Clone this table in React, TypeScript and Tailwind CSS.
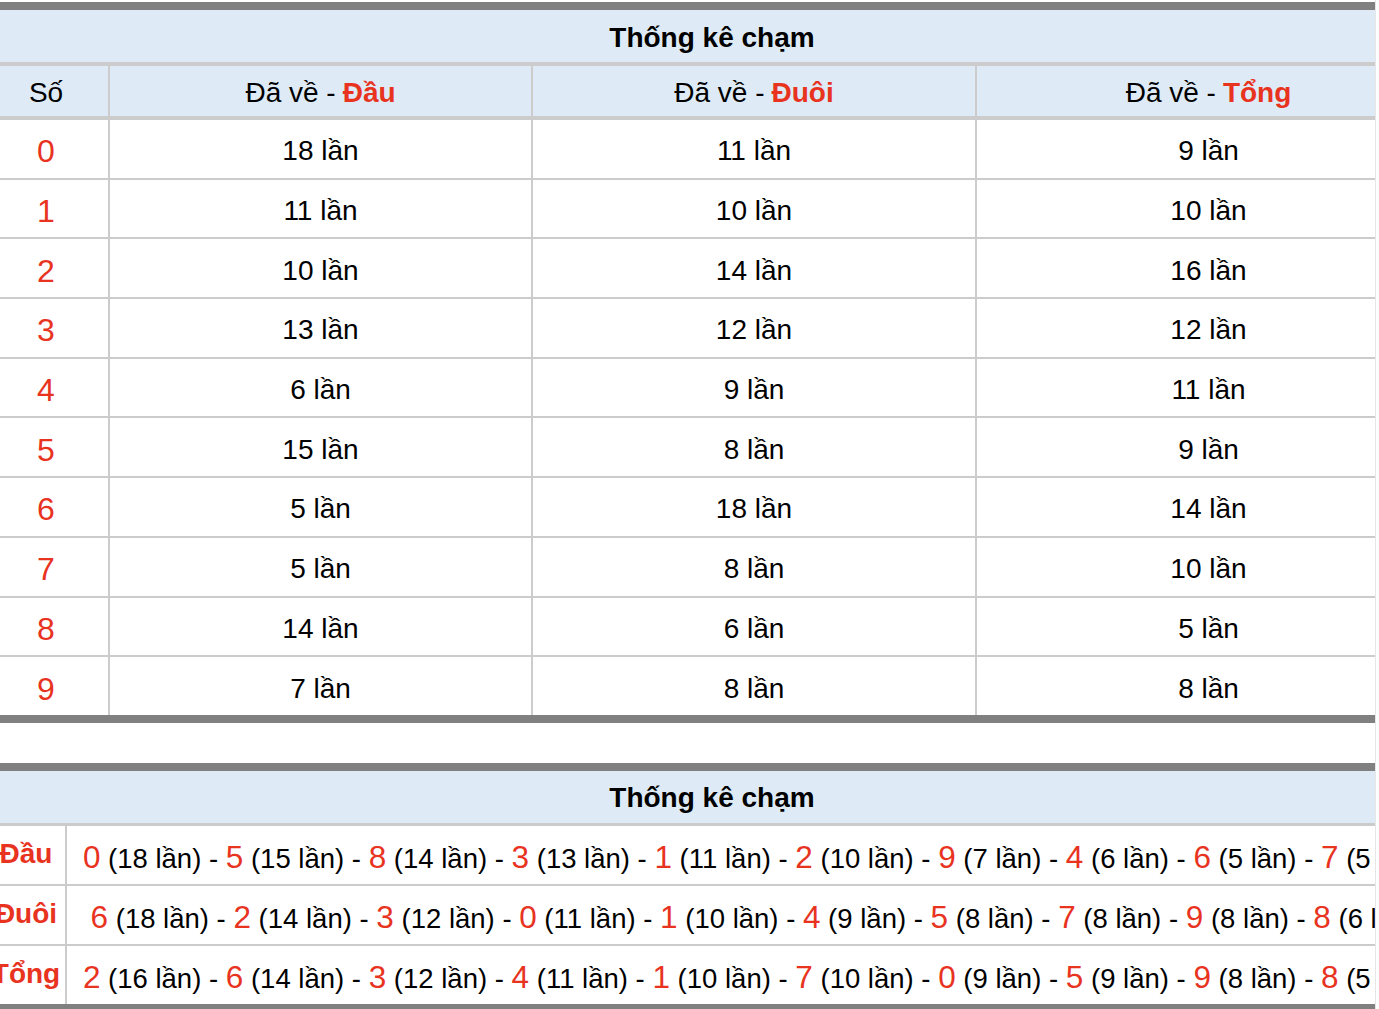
const counts = [
  { so: 0, dau: 18, duoi: 11, tong: 9 },
  { so: 1, dau: 11, duoi: 10, tong: 10 },
  { so: 2, dau: 10, duoi: 14, tong: 16 },
  { so: 3, dau: 13, duoi: 12, tong: 12 },
  { so: 4, dau: 6, duoi: 9, tong: 11 },
  { so: 5, dau: 15, duoi: 8, tong: 9 },
  { so: 6, dau: 5, duoi: 18, tong: 14 },
  { so: 7, dau: 5, duoi: 8, tong: 10 },
  { so: 8, dau: 14, duoi: 6, tong: 5 },
  { so: 9, dau: 7, duoi: 8, tong: 8 },
];

const ranking: { label: string; items: [number, number][] }[] = [
  {
    label: "Đầu",
    items: [[0, 18], [5, 15], [8, 14], [3, 13], [1, 11], [2, 10], [9, 7], [4, 6], [6, 5], [7, 5]],
  },
  {
    label: "Đuôi",
    items: [[6, 18], [2, 14], [3, 12], [0, 11], [1, 10], [4, 9], [5, 8], [7, 8], [9, 8], [8, 6]],
  },
  {
    label: "Tổng",
    items: [[2, 16], [6, 14], [3, 12], [4, 11], [1, 10], [7, 10], [0, 9], [5, 9], [9, 8], [8, 5]],
  },
];

function HeadCell({ kind }: { kind: string }) {
  return (
    <div className="bg-[#deebf6] flex items-center justify-center h-[52px] pt-[4px] border-b-2 border-[#cccccc]">
      Đã về - <span className="ml-[7px] font-bold text-[#e8331f]">{kind}</span>
    </div>
  );
}

const cell = "bg-white h-[57.7px] flex items-center justify-center pt-[5px]";

export default function App() {
  return (
    <div
      className="w-[1376px] overflow-hidden border-r border-[#e6e6e6] bg-white pt-[2px] text-[28px] text-black"
      style={{ fontFamily: '"Liberation Sans", Arial, sans-serif' }}
    >
      {/* trang bị cuộn ngang ~16px */}
      <div className="-ml-[16px] w-[1456px]">
        {/* bảng 1 */}
        <div className="border-y-8 border-[#808080]">
          <div className="bg-[#deebf6] h-[52px] flex items-center justify-center pt-[3px] font-bold">
            Thống kê chạm
          </div>
          <div className="grid grid-cols-[124px_421px_442px_463px] gap-[2px] bg-[#cccccc] pt-[4px]">
            <div className="bg-[#deebf6] flex items-center justify-center h-[52px] pt-[4px] border-b-2 border-[#cccccc]">
              Số
            </div>
            <HeadCell kind="Đầu" />
            <HeadCell kind="Đuôi" />
            <HeadCell kind="Tổng" />
            {counts.map((r) => (
              <div key={r.so} className="contents">
                <div className={`${cell} text-[32px] text-[#e8331f]`}>{r.so}</div>
                <div className={cell}>{r.dau} lần</div>
                <div className={cell}>{r.duoi} lần</div>
                <div className={cell}>{r.tong} lần</div>
              </div>
            ))}
          </div>
        </div>

        <div className="h-[40px]" />

        {/* bảng 2 */}
        <div className="border-y-8 border-[#808080]">
          <div className="bg-[#deebf6] h-[52px] flex items-center justify-center pt-[3px] font-bold">
            Thống kê chạm
          </div>
          <div className="grid grid-cols-[81px_1373px] gap-[2px] bg-[#cccccc] pt-[3px]">
            {ranking.map((row) => (
              <div key={row.label} className="contents">
                <div className="bg-white h-[58px] flex items-center justify-center pl-[3px] pb-[2px] font-bold text-[#e8331f] whitespace-nowrap">
                  {row.label}
                </div>
                <div className="bg-white h-[58px] flex items-center justify-center pt-[5px] whitespace-nowrap text-[27.5px] overflow-hidden">
                  <span className="whitespace-pre shrink-0">
                    {row.items.map(([n, c], i) => (
                      <span key={n}>
                        {i > 0 ? " - " : ""}
                        <span className="text-[31.5px] text-[#e8331f]">{n}</span> ({c} lần)
                      </span>
                    ))}
                  </span>
                </div>
              </div>
            ))}
          </div>
        </div>
      </div>
    </div>
  );
}
